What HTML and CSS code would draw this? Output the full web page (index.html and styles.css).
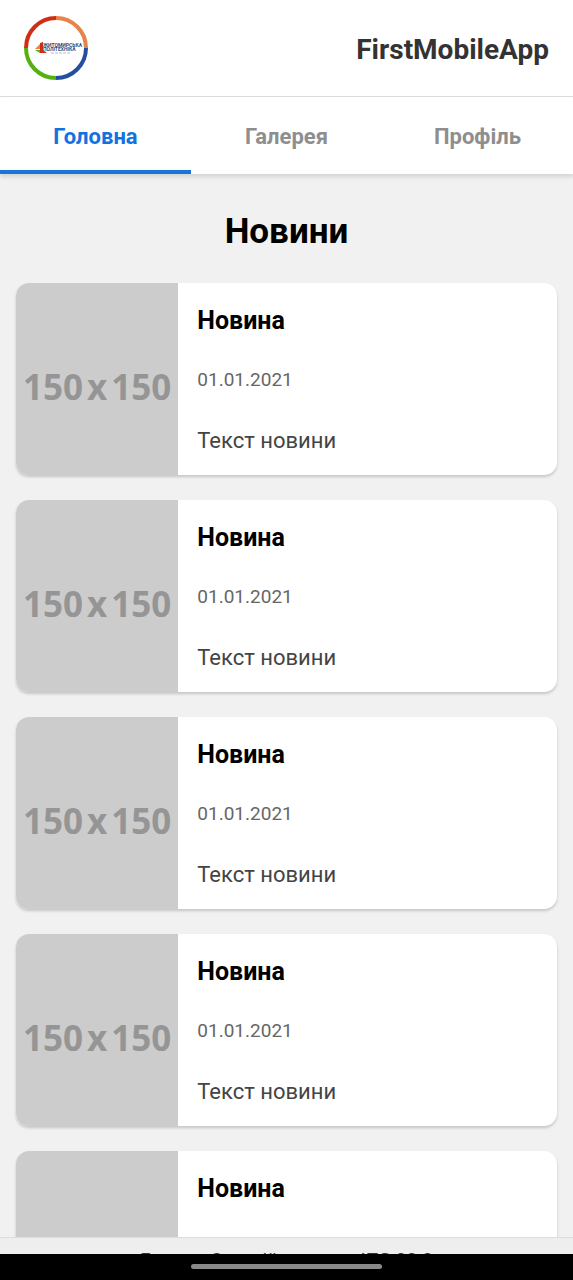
FILE: index.html
```html
<!DOCTYPE html>
<html lang="uk">
<head>
<meta charset="utf-8">
<meta name="viewport" content="width=device-width, initial-scale=1">
<title>FirstMobileApp</title>
<link rel="stylesheet" href="styles.css">
</head>
<body>
<div class="app">
  <header class="header">
    <svg class="logo" viewBox="0 0 66 66" role="img" aria-label="Житомирська політехніка">
      <g fill="none" stroke-width="4">
        <path d="M3 33A30 30 0 0 1 33 3" stroke="#d02e12"/>
        <path d="M33 3A30 30 0 0 1 63 33" stroke="#e5834a"/>
        <path d="M63 33A30 30 0 0 1 33 63" stroke="#234f9e"/>
        <path d="M33 63A30 30 0 0 1 3 33" stroke="#55b010"/>
      </g>
      <path d="M12 34L17 29V34Z" fill="#e5834a"/>
      <path d="M12 35H17V38Z" fill="#55b010"/>
      <path d="M17 28L20 27V35L24 38H17Z" fill="#d02e12"/>
      <g class="logo-text">
        <text x="20" y="32">ЖИТОМИРСЬКА</text>
        <text x="20" y="36">ПОЛІТЕХНІКА</text>
      </g>
      <path d="M28 38H48" stroke="#b4c0d4" stroke-dasharray="3 1"/>
    </svg>
    <h1 class="app-name">FirstMobileApp</h1>
  </header>
  <nav class="tabs">
    <button class="tab tab-active" type="button" aria-current="page">Головна</button>
    <button class="tab" type="button">Галерея</button>
    <button class="tab" type="button">Профіль</button>
  </nav>
  <main class="content">
    <h2 class="title">Новини</h2>
    <article class="card">
      <div class="thumb"><span>150</span><span>x</span><span>150</span></div>
      <div class="body"><h3 class="name">Новина</h3><time class="date">01.01.2021</time><p class="text">Текст новини</p></div>
    </article>
    <article class="card">
      <div class="thumb"><span>150</span><span>x</span><span>150</span></div>
      <div class="body"><h3 class="name">Новина</h3><time class="date">01.01.2021</time><p class="text">Текст новини</p></div>
    </article>
    <article class="card">
      <div class="thumb"><span>150</span><span>x</span><span>150</span></div>
      <div class="body"><h3 class="name">Новина</h3><time class="date">01.01.2021</time><p class="text">Текст новини</p></div>
    </article>
    <article class="card">
      <div class="thumb"><span>150</span><span>x</span><span>150</span></div>
      <div class="body"><h3 class="name">Новина</h3><time class="date">01.01.2021</time><p class="text">Текст новини</p></div>
    </article>
    <article class="card">
      <div class="thumb"></div>
      <div class="body"><h3 class="name">Новина</h3></div>
    </article>
  </main>
  <footer class="footer">Грищук Євгеній, студент ІПЗ-22-2</footer>
  <div class="system-bar"><div class="handle"></div></div>
</div>
</body>
</html>
```
FILE: styles.css
```css
* { box-sizing: border-box; }
body, h1, h2, h3, p { margin: 0; }
body { font-family: Roboto, "Noto Sans", sans-serif; background: #f1f1f1; color: #000; }
.app { height: 100vh; display: flex; flex-direction: column; overflow: hidden; }
.header { flex: none; display: flex; align-items: center; justify-content: space-between; padding: 15px 24px; background: #fff; border-bottom: 1px solid #ddd; }
.logo { width: 66px; height: 66px; margin-left: -1px; }
.logo-text { font-size: 5px; font-weight: 700; fill: #234f7e; }
.app-name { font-size: 28px; line-height: 32px; padding-top: 4px; font-weight: 700; color: #333; }
.tabs { flex: none; display: grid; grid-template-columns: repeat(3, 1fr); background: #fff; box-shadow: 0 3px 4px rgba(0, 0, 0, .12); z-index: 1; }
.tab { height: 77px; padding: 6px 0 0; border: 0; border-bottom: 4px solid transparent; background: none; font: 700 22px/28px Roboto, "Noto Sans", sans-serif; color: #8e8e8f; }
.tab-active { color: #1273de; border-bottom-color: #1976d9; }
.content { flex: 1; min-height: 0; overflow: hidden; padding: 34px 16px 0; }
.title { font-size: 35px; line-height: 48px; font-weight: 700; text-align: center; margin-bottom: 27px; }
.card { display: flex; height: 192px; margin-bottom: 25px; border-radius: 13px; overflow: hidden; background: #fff; box-shadow: 0 2px 3px rgba(0, 0, 0, .18); }
.thumb { flex: none; width: 30%; display: flex; align-items: center; justify-content: center; gap: 4px; padding-top: 16px; background: #ccc; color: #959595; font: 700 35px/48px "Open Sans", sans-serif; }
.body { flex: 1; padding: 20px 19px; display: flex; flex-direction: column; }
.name { font-size: 25px; line-height: 36px; font-weight: 700; }
.date { font-size: 19px; line-height: 28px; margin-top: 27px; color: #666; }
.text { font-size: 22px; line-height: 32px; margin-top: 31px; color: #444; }
.footer { flex: none; height: 17px; overflow: hidden; padding-top: 10px; border-top: 1px solid #ddd; background: #eee; color: #333; font-size: 19px; line-height: 24px; text-align: center; }
.system-bar { flex: none; height: 26px; padding-top: 10px; background: #000; }
.handle { width: 33.3%; height: 5px; margin: 0 auto; border-radius: 3px; background: #888; }
```
